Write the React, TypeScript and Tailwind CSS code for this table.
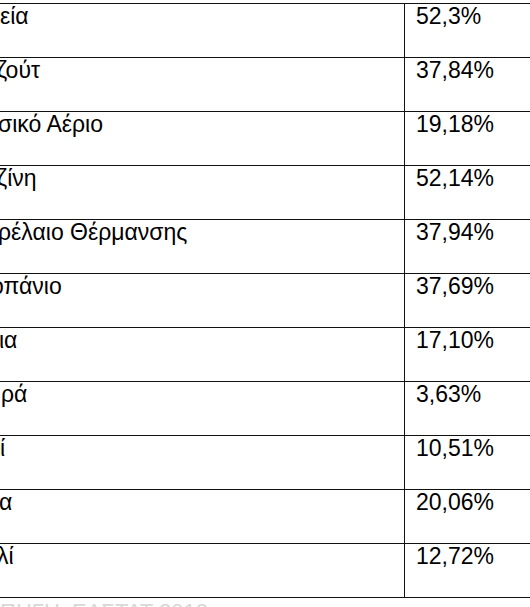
const rows: { name: string; shift: string; value: string }[] = [
  { name: "εία", shift: "ml-[0px]", value: "52,3%" },
  { name: "ζούτ", shift: "ml-[-3px]", value: "37,84%" },
  { name: "σικό Αέριο", shift: "ml-[-2px]", value: "19,18%" },
  { name: "ζίνη", shift: "ml-[-3px]", value: "52,14%" },
  { name: "ρέλαιο Θέρμανσης", shift: "ml-[-2px]", value: "37,94%" },
  { name: "οπάνιο", shift: "ml-[-9px]", value: "37,69%" },
  { name: "ια", shift: "ml-[-1px]", value: "17,10%" },
  { name: "ρά", shift: "ml-[1px]", value: "3,63%" },
  { name: "ί", shift: "ml-[0px]", value: "10,51%" },
  { name: "α", shift: "ml-[-1px]", value: "20,06%" },
  { name: "λί", shift: "ml-[-3px]", value: "12,72%" },
];

export default function App() {
  return (
    <div
      className="w-[530px] h-[607px] overflow-hidden bg-white pt-[3px] text-black"
      style={{ fontFamily: '"Liberation Sans", Arial, sans-serif' }}
    >
      <div className="w-[600px] border-t border-[#111]">
        {rows.map((r) => (
          <div key={r.value + r.name} className="flex h-[54px] border-b border-[#111]">
            <div className="w-[404px] overflow-hidden pt-[1px] text-[23px] leading-[22px] whitespace-nowrap">
              <span className={`inline-block ${r.shift}`}>{r.name}</span>
            </div>
            <div className="flex-1 border-l border-[#111] pl-[11px] pt-[1px] text-[23px] leading-[22px]">
              {r.value}
            </div>
          </div>
        ))}
      </div>
      <div className="mt-[3px] text-[22px] leading-[22px] text-[#d8d8d8] whitespace-nowrap">
        ΠΗΓΗ: ΕΛΣΤΑΤ 2012
      </div>
    </div>
  );
}
